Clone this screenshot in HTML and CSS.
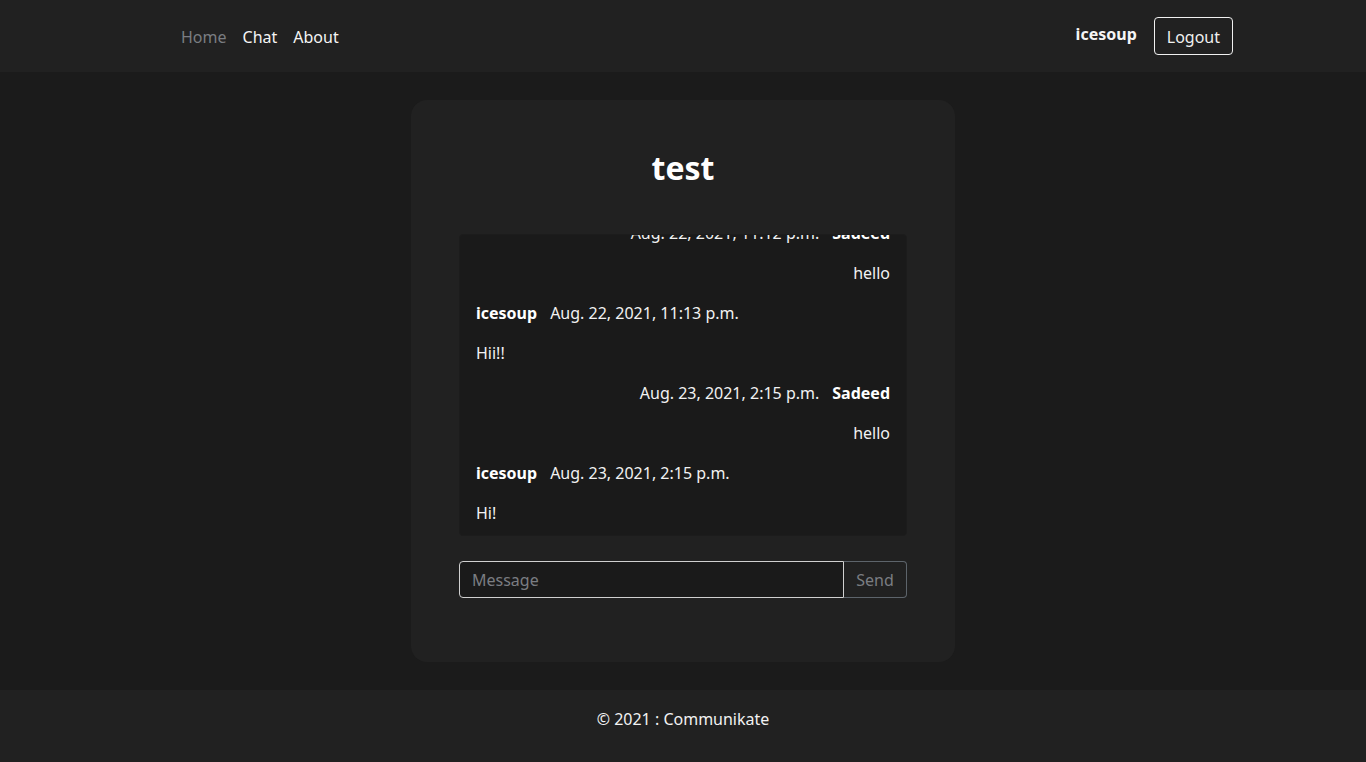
FILE: index.html
```html
<!DOCTYPE html>
<html lang="en">
<head>
<meta charset="utf-8">
<title>Communikate</title>
<link rel="stylesheet" href="styles.css">
</head>
<body>
<header class="navbar">
  <div class="nav-container">
    <nav class="nav-links">
      <a class="nav-link muted" href="#">Home</a>
      <a class="nav-link" href="#">Chat</a>
      <a class="nav-link" href="#">About</a>
    </nav>
    <div class="nav-user">
      <span class="username">icesoup</span>
      <a class="btn-logout" href="#">Logout</a>
    </div>
  </div>
</header>
<main class="main">
  <section class="card">
    <h1 class="title">test</h1>
    <div class="chat-box">
      <div class="row right"><span class="date">Aug. 22, 2021, 11:12 p.m.</span><span class="author">Sadeed</span></div>
      <div class="row right">hello</div>
      <div class="row"><span class="author">icesoup</span><span class="date">Aug. 22, 2021, 11:13 p.m.</span></div>
      <div class="row">Hii!!</div>
      <div class="row right"><span class="date">Aug. 23, 2021, 2:15 p.m.</span><span class="author">Sadeed</span></div>
      <div class="row right">hello</div>
      <div class="row"><span class="author">icesoup</span><span class="date">Aug. 23, 2021, 2:15 p.m.</span></div>
      <div class="row">Hi!</div>
    </div>
    <form class="input-group">
      <input class="message-input" type="text" placeholder="Message">
      <button class="btn-send" type="button">Send</button>
    </form>
  </section>
</main>
<footer class="footer">© 2021 : Communikate</footer>
</body>
</html>
```
FILE: styles.css
```css
* { box-sizing: border-box; }
html, body { height: 100%; }
body {
  margin: 0;
  background: #1b1b1b;
  color: #f2f2f2;
  font-family: "Noto Sans", "Open Sans", sans-serif;
  font-size: 16px;
  line-height: 24px;
  display: flex;
  flex-direction: column;
}
a { text-decoration: none; color: inherit; }

.navbar {
  background: #212121;
  height: 72px;
  flex: none;
}
.nav-container {
  width: 1100px;
  margin: 0 auto;
  height: 100%;
  display: flex;
  align-items: center;
  justify-content: space-between;
}
.nav-links {
  display: flex;
  padding-left: 40px;
  padding-top: 2px;
}
.nav-link {
  padding: 8px;
  color: #f5f5f5;
}
.nav-link.muted { color: #7a7d82; }
.nav-user {
  display: flex;
  align-items: center;
  gap: 17px;
}
.username {
  font-weight: 700;
  color: #f5f5f5;
  margin-top: -4px;
}
.btn-logout {
  display: block;
  height: 38px;
  padding: 7px 12px 5px;
  border: 1px solid #f0f0f0;
  border-radius: 4px;
  color: #f0f0f0;
}

.main {
  flex: 1;
  display: flex;
  justify-content: center;
  align-items: flex-start;
  padding-top: 28px;
}
.card {
  width: 544px;
  height: 562px;
  background: #212121;
  border-radius: 16px;
  padding: 49px 48px 48px;
  display: flex;
  flex-direction: column;
}
.title {
  margin: 0 0 47px;
  text-align: center;
  font-size: 32px;
  line-height: 38px;
  font-weight: 700;
  color: #fff;
}
.chat-box {
  height: 302px;
  background: #1a1a1a;
  border: 1px solid #1c1c1c;
  border-radius: 4px;
  padding: 0 16px 2px;
  overflow: hidden;
  display: flex;
  flex-direction: column;
  justify-content: flex-end;
  flex: none;
}
.row {
  flex: none;
  padding: 8px 0;
  display: flex;
  gap: 13px;
  color: #f2f2f2;
}
.row.right { justify-content: flex-end; }
.author { font-weight: 700; color: #fff; }

.input-group {
  margin: 25px 0 0;
  display: flex;
  height: 37px;
}
.message-input {
  flex: 1;
  min-width: 0;
  height: 37px;
  background: #1a1a1a;
  border: 1px solid #d0d0d0;
  border-radius: 4px 0 0 4px;
  padding: 6px 12px;
  font: inherit;
  color: #eee;
  outline: none;
}
.message-input::placeholder { color: #7a7d82; }
.btn-send {
  width: 63px;
  height: 37px;
  background: transparent;
  border: 1px solid #5d646b;
  border-left: none;
  border-radius: 0 4px 4px 0;
  color: #7a7d82;
  font: inherit;
  padding: 6px 12px;
}

.footer {
  flex: none;
  height: 72px;
  background: #212121;
  display: flex;
  align-items: center;
  justify-content: center;
  color: #f2f2f2;
  padding-bottom: 15px;
}
```
